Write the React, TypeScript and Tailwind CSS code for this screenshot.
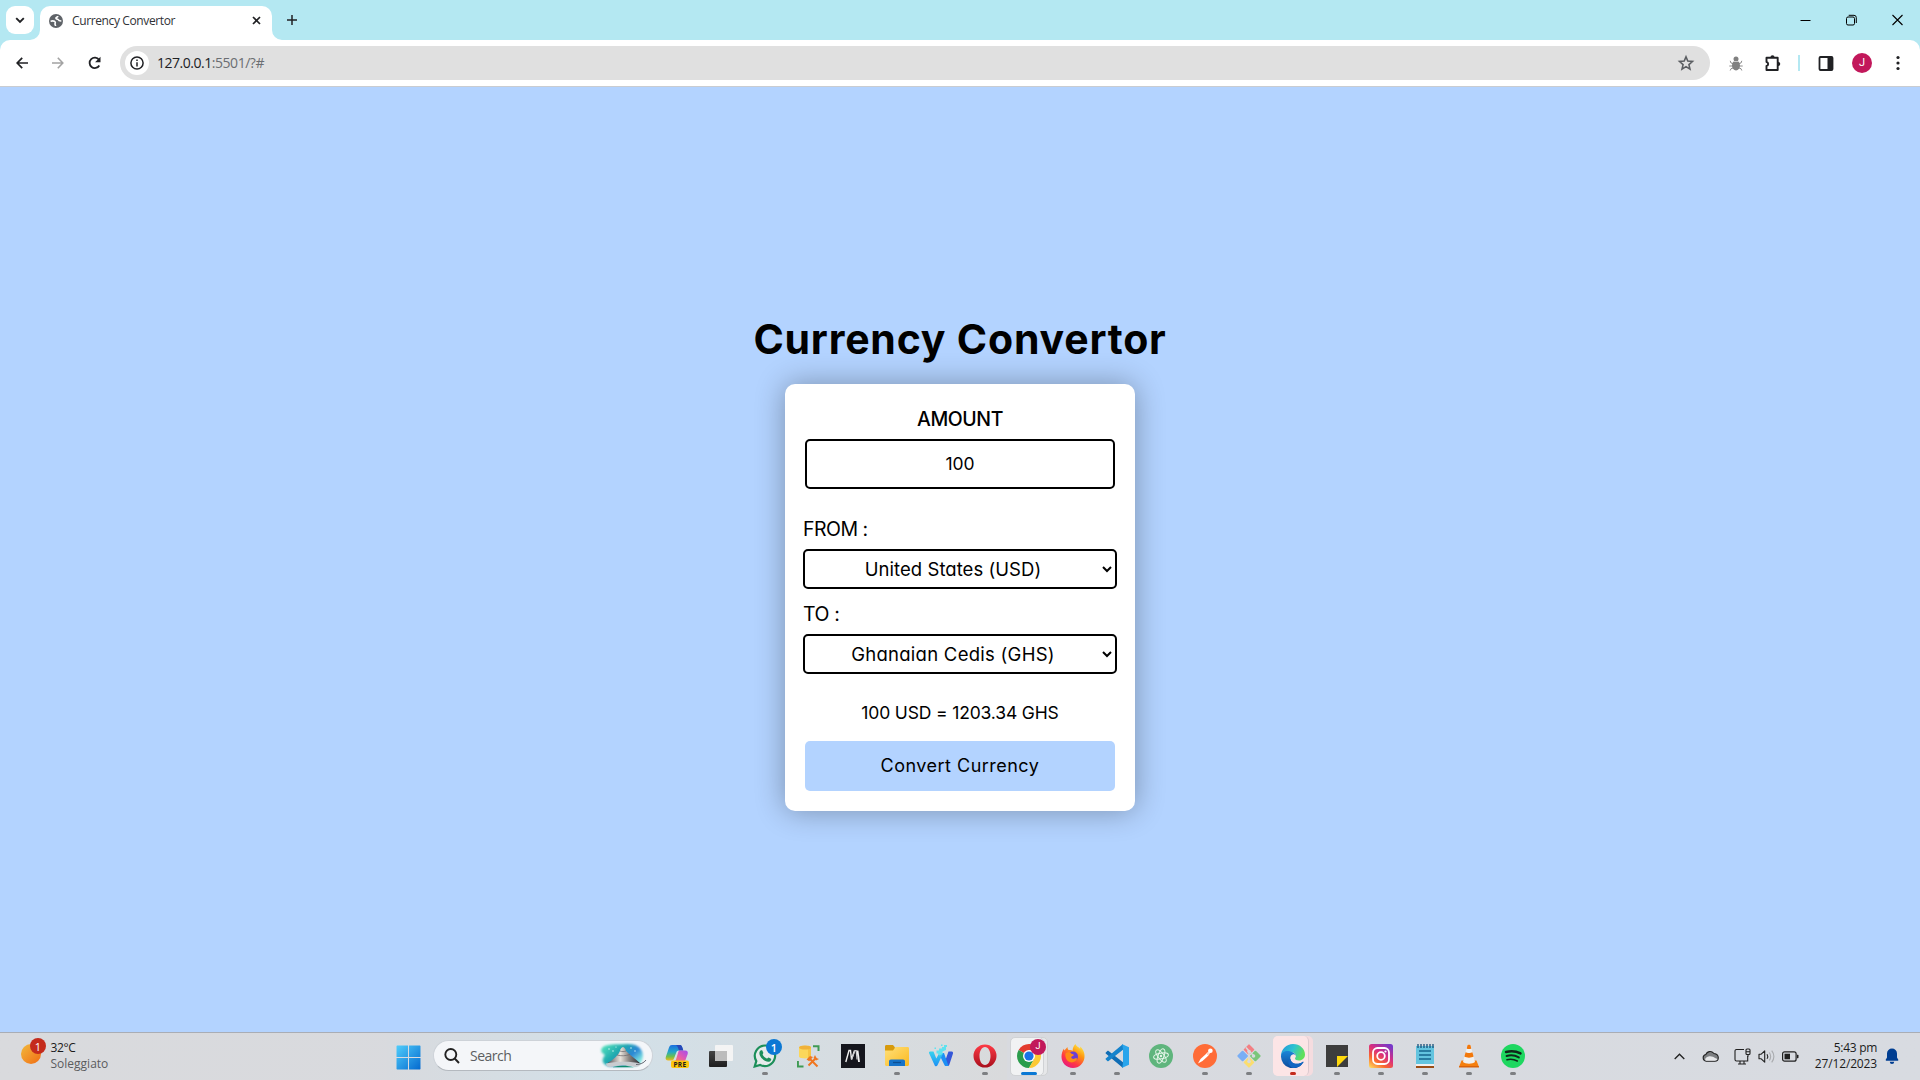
import type { ReactNode } from 'react';

/* ---------- Browser window ---------- */

function TabStrip() {
  return (
    <div className="flex h-10 items-start bg-[#b4e8f2]">
      <button className="mt-1.5 ml-1.5 flex size-7 items-center justify-center rounded-[9px] bg-white">
        <svg width="10" height="7" viewBox="0 0 10 7" fill="none" stroke="#202124" strokeWidth="1.9">
          <path d="M1.2 1.2 5 5l3.8-3.8" />
        </svg>
      </button>
      <svg className="mt-[30px] ml-[-4px] shrink-0" width="10" height="10" viewBox="0 0 10 10">
        <path d="M10 0v10H0A10 10 0 0 0 10 0Z" fill="#fff" />
      </svg>
      <div className="mt-1.5 flex h-[34px] w-[232px] items-center rounded-t-[10px] bg-white pr-[11.5px] pl-[9px]">
        <svg className="mb-[5px]" width="14" height="14" viewBox="0 0 14 14">
          <circle cx="7" cy="7" r="7" fill="#5f6368" />
          <path
            d="M1.600 7.200c1.600-.4 4-.4 4.600.8.500 1.100-.5 1.400-.2 2.300.2.700.6 1 .5 1.700M8.800 2c.1 1.500-2 1.100-1.900 2.300.1 1.200 2 .5 2.400 1.500.4 1 1.500 1.100 3 1.300"
            stroke="#fff"
            strokeWidth="1.600"
            fill="none"
          />
        </svg>
        <span className="mb-[5px] ml-[9px] flex-1 font-['Open_Sans',sans-serif] text-xs tracking-[-0.38px] whitespace-nowrap text-[#303236]">
          Currency Convertor
        </span>
        <svg className="mb-[6px]" width="9" height="9" viewBox="0 0 9 9" stroke="#202124" strokeWidth="1.7">
          <path d="M1 1l7 7M8 1 1 8" />
        </svg>
      </div>
      <svg className="mt-[30px] shrink-0" width="10" height="10" viewBox="0 0 10 10">
        <path d="M0 0v10h10A10 10 0 0 1 0 0Z" fill="#fff" />
      </svg>
      <svg className="mt-[15px] ml-[5px]" width="10" height="10" viewBox="0 0 10 10" stroke="#202124" strokeWidth="1.5">
        <path d="M5 0v10M0 5h10" />
      </svg>
      <div className="mt-[14px] mr-[17px] ml-auto flex items-center gap-[35px]">
        <svg width="11" height="12" viewBox="0 0 11 12" stroke="#000" strokeWidth="1">
          <path d="M.5 6.500h10" />
        </svg>
        <svg width="11" height="12" viewBox="0 0 11 12" fill="none" stroke="#000" strokeWidth="1">
          <rect x=".5" y="3" width="8" height="8" rx="1.500" />
          <path d="M2.700 1.300h5.300a2.300 2.300 0 0 1 2.300 2.300V9" />
        </svg>
        <svg width="11" height="12" viewBox="0 0 11 12" stroke="#000" strokeWidth="1.100">
          <path d="M.5 1l10 10M10.500 1l-10 10" />
        </svg>
      </div>
    </div>
  );
}

function Toolbar() {
  return (
    <div className="bg-[#b4e8f2]">
      <div className="flex h-[47px] items-center rounded-t-[10px] border-b border-[#c9ccd1] bg-white pl-4">
        <svg width="12" height="12" viewBox="0 0 12 12" fill="none" stroke="#202124" strokeWidth="1.7">
          <path d="M12 6H1.200M6.200.8 1.200 6l5 5.200" />
        </svg>
        <svg className="ml-6" width="12" height="12" viewBox="0 0 12 12" fill="none" stroke="#a3a3a3" strokeWidth="1.600">
          <path d="M0 6h10.800M5.800.8l5 5.200-5 5.200" />
        </svg>
        <svg className="ml-6" width="14" height="14" viewBox="0 0 14 14" fill="none" stroke="#202124" strokeWidth="1.800">
          <path d="M11.300 9.500A5.200 5.200 0 1 1 11 3.800" />
          <path d="M12.500.8v5.400H7.100Z" fill="#202124" stroke="none" />
        </svg>
        <div className="ml-[18px] flex h-[34px] w-[1590px] items-center rounded-full bg-[#e0e0e0] pr-[15px] pl-[5px]">
          <span className="flex size-6 items-center justify-center rounded-full bg-white">
            <svg width="14" height="14" viewBox="0 0 14 14" fill="none" stroke="#202124" strokeWidth="1.500">
              <circle cx="7" cy="7" r="6.100" />
              <path d="M7 6.200v4.300M7 3.400v1.500" />
            </svg>
          </span>
          <span className="ml-2 flex-1 font-['Open_Sans',sans-serif] text-sm tracking-[-0.47px] whitespace-nowrap text-[#202124]">
            127.0.0.1<span className="text-[#6b6e72]">:5501/?#</span>
          </span>
          <svg width="18" height="18" viewBox="0 0 24 24" fill="none" stroke="#5b5e62" strokeWidth="2.100">
            <path d="M12 3.800l2.400 5.700 6.200.5-4.700 4.100 1.400 6L12 16.900l-5.300 3.200 1.400-6L3.400 10l6.200-.5Z" />
          </svg>
        </div>
        <svg className="ml-[19px]" width="14" height="15" viewBox="0 0 14 15" fill="#808080" stroke="#808080">
          <circle cx="7" cy="3" r="2.500" stroke="none" />
          <ellipse cx="7" cy="9.500" rx="4" ry="5" stroke="none" />
          <path d="M4 7.500 2 7 1.200 4.800M10 7.500l2-.5.800-2.200M3.500 10H.3M10.500 10h3.200M4 12l-2 .7-.8 1.800M10 12l2 .7.800 1.800" fill="none" strokeWidth=".9" />
          <path d="M4.500 5.500h5" stroke="#ddd" strokeWidth=".8" />
        </svg>
        <svg className="ml-[21px]" width="18" height="17" viewBox="0 0 18 17" fill="none" stroke="#202124" strokeWidth="1.900">
          <path d="M2.500 2.800h11.200V15H2.500v-4c2.200-.5 2.200-3.500 0-4Z" strokeLinejoin="round" />
          <path d="M7.200 2.300a1.300 1.300 0 0 1 2.600 0ZM14.200 7.600a1.300 1.300 0 0 1 0 2.600Z" fill="#202124" strokeWidth="1.500" />
        </svg>
        <span className="ml-4 h-4 w-0.5 bg-[#b4e8f2]" />
        <svg className="ml-[18px]" width="16" height="15" viewBox="0 0 16 15">
          <rect x="1.500" y="1" width="13" height="13" rx="1" fill="none" stroke="#202124" strokeWidth="1.800" />
          <path d="M9.500 1H15v13H9.500Z" fill="#202124" />
        </svg>
        <span className="ml-[18px] flex size-5 items-center justify-center rounded-full bg-[#c2185b] font-['Roboto',sans-serif] text-[11px] text-white">
          J
        </span>
        <svg className="ml-6" width="4" height="16" viewBox="0 0 4 16" fill="#202124">
          <circle cx="2" cy="2.500" r="1.600" />
          <circle cx="2" cy="8" r="1.600" />
          <circle cx="2" cy="13.500" r="1.600" />
        </svg>
      </div>
    </div>
  );
}

/* ---------- Converter page ---------- */

const selectClass =
  'h-10 w-full rounded-[5px] border-2 border-black bg-white pr-0.5 text-center text-[18.5px] text-black';

function Converter() {
  return (
    <main className="flex h-[945px] flex-col items-center justify-center bg-[#b3d3ff] font-['Inter',sans-serif] text-black [font-feature-settings:'cv11']">
      <h1 className="h-[60px] text-[41px] leading-[60px] font-bold tracking-[0.8px] whitespace-nowrap">Currency Convertor</h1>
      <form className="mt-[15px] flex h-[427px] w-[350px] flex-col rounded-[10px] bg-white px-[18px] pt-5 shadow-[0_0_30px_rgba(0,0,0,0.32)]">
        <label className="text-center text-[19.5px] leading-[31px] font-medium tracking-[-0.4px]">AMOUNT</label>
        <input
          className="mx-0.5 mt-1 h-[50px] rounded-[5px] border-2 border-black text-center text-[17.5px]"
          defaultValue="100"
        />
        <label className="mt-[25px] text-[19.5px] leading-[31px] tracking-[-0.5px]">FROM :</label>
        <select className={`${selectClass} mt-1 tracking-[0.05px]`}>
          <option>United States (USD)</option>
        </select>
        <label className="mt-2.5 text-[19.5px] leading-[31px] tracking-[-0.4px]">TO :</label>
        <select className={`${selectClass} mt-1 tracking-[0.27px]`}>
          <option>Ghanaian Cedis (GHS)</option>
        </select>
        <p className="mt-[25px] text-center text-[17.5px] leading-[27px] tracking-[-0.15px]">100 USD = 1203.34 GHS</p>
        <button type="button" className="mx-0.5 mt-[15px] h-[50px] rounded-[5px] bg-[#b3d3ff] text-[18px] tracking-[0.48px]">
          Convert Currency
        </button>
      </form>
    </main>
  );
}

/* ---------- Taskbar icons ---------- */

function CopilotIcon() {
  return (
    <svg width="24" height="24" viewBox="0 0 24 24">
      <defs>
        <linearGradient id="cpA" x1="0" y1="0" x2="0" y2="1">
          <stop offset="0" stopColor="#1b6ee0" />
          <stop offset=".45" stopColor="#22a8c8" />
          <stop offset=".75" stopColor="#6fc04a" />
          <stop offset="1" stopColor="#f2b91c" />
        </linearGradient>
        <linearGradient id="cpB" x1="1" y1="0" x2="0" y2="1">
          <stop offset="0" stopColor="#a14df0" />
          <stop offset=".5" stopColor="#e359b0" />
          <stop offset="1" stopColor="#fb8b4b" />
        </linearGradient>
      </defs>
      <path d="M7 1h8c1.500 0 2 1.500 2.500 3l.8 2.500H14c-1.500 0-2.300.8-2.800 2.200L9 14.500C8.500 16 7.600 16.500 6.300 16.500H3.200C1 16.500.2 15 .8 13L4 3.500C4.600 1.800 5.500 1 7 1Z" fill="url(#cpA)" />
      <path d="M11 1h4c1.500 0 2 1.500 2.500 3l.8 2.500H14L12.500 2.500Z" fill="#2748b8" />
      <path d="M14.500 6.500h5.800c2 0 3 1.500 2.400 3.500L20.500 16c-.5 1.500-1.300 2-2.600 2H8.500c1.400 0 2-1 2.500-2.400l2-6.600c.4-1.500.7-2.500 1.500-2.500Z" fill="url(#cpB)" />
      <rect x="6" y="16.500" width="18" height="7.500" rx="2" fill="#fdc60b" />
      <text x="15" y="22.600" textAnchor="middle" fontFamily="Open Sans, sans-serif" fontWeight="700" fontSize="6.500" letterSpacing=".4" fill="#1b1b1b">PRE</text>
    </svg>
  );
}

function TaskViewIcon() {
  return (
    <svg width="24" height="24" viewBox="0 0 24 24">
      <defs>
        <linearGradient id="tvA" x1="0" y1="0" x2="0" y2="1">
          <stop offset="0" stopColor="#444" />
          <stop offset="1" stopColor="#1e1e1e" />
        </linearGradient>
      </defs>
      <rect x="0" y="7" width="18" height="16" rx="1" fill="url(#tvA)" />
      <rect x="6" y="1" width="18" height="16" rx="1" fill="#f4f4f4" />
      <path d="M6 7h12v10H7a1 1 0 0 1-1-1Z" fill="#bcbcbc" />
    </svg>
  );
}

function WhatsAppIcon() {
  return (
    <svg width="24" height="24" viewBox="0 0 24 24">
      <path d="M12.200 1.500a10.300 10.300 0 0 0-8.900 15.600L1.700 22.500l5.500-1.500A10.300 10.300 0 1 0 12.200 1.500Z" fill="#e6ebeb" stroke="#1c8f5a" strokeWidth="2.200" />
      <path d="M8 6.300c.5-.3 1-.2 1.300.3l1 2.200c.2.500-.9 1.400-.6 2 .9 1.700 2.300 2.900 4 3.700.6.300 1.500-1.200 2-1l2.300 1.200c.6.400-.3 2.500-1.200 2.800-1.300.6-3 .3-5-.8-2.300-1.300-4.200-3.300-5-5.400-.8-2-.5-4.100 1.200-5Z" fill="#1c8f5a" />
    </svg>
  );
}

function DatabaseToolsIcon() {
  return (
    <svg width="24" height="24" viewBox="0 0 24 24">
      <path d="M2 3.500C2 1 14 1 14 3.500v9c0 2.500-12 2.500-12 0Z" fill="#fbd75b" />
      <path d="M11 1.800c2 .3 3 .9 3 1.700v9c0 .9-1 1.500-3 1.800Z" fill="#f6c544" />
      <ellipse cx="8" cy="3.500" rx="6" ry="2" fill="#f0b23a" />
      <path d="M16 2.200h5.500V7M.9 17v5.500h5.600" fill="none" stroke="#3f9b54" strokeWidth="2" />
      <path d="M11.500 21.500l6.500-6.500M12.500 14.500l8 8" stroke="#f0761f" strokeWidth="2" fill="none" />
      <path d="M9.500 15.500l3.500-3.500 3 1-3.800 4.200ZM18 11l-1.500 3 2.500 2.500 3-1.500-2-.8-.9-1Z" fill="#f0761f" />
    </svg>
  );
}

function MIcon() {
  return (
    <svg width="24" height="24" viewBox="0 0 24 24">
      <path d="M0 0h24v24H0Z" fill="#15161d" />
      <path d="M4.800 18 8 6.500h1.500l1 9L13.500 6.500" fill="none" stroke="#f2f2f2" strokeWidth="1.400" />
      <path d="M10.500 15.500 14 6.500h1.200l.8 9" fill="none" stroke="#c9c9cc" strokeWidth="1.200" />
      <path d="M16.500 6.500 18 18" stroke="#f2f2f2" strokeWidth="1.900" />
    </svg>
  );
}

function FolderIcon() {
  return (
    <svg width="24" height="24" viewBox="0 0 24 24">
      <defs>
        <linearGradient id="foA" x1="0" y1="0" x2="1" y2="1">
          <stop offset="0" stopColor="#ffe07a" />
          <stop offset="1" stopColor="#fbb91f" />
        </linearGradient>
      </defs>
      <path d="M0 2.500C0 1.500.6 1 1.500 1H8l2 2.500V9H0Z" fill="#d79a0c" />
      <path d="M0 6.500h8L10.500 3H22.500c1 0 1.500.5 1.500 1.500v16c0 .9-.6 1.500-1.500 1.500h-21C.6 22 0 21.400 0 20.500Z" fill="url(#foA)" />
      <path d="M4 22v-4.500c0-1.300.7-2 2-2h12c1.300 0 2 .7 2 2V22Z" fill="#1673c9" />
      <path d="M8 18.500h8" stroke="#0d4f92" strokeWidth="1.300" />
    </svg>
  );
}

function WIcon() {
  return (
    <svg width="24" height="24" viewBox="0 0 24 24">
      <defs>
        <linearGradient id="wA" x1="0" y1="0" x2="0" y2="1">
          <stop offset="0" stopColor="#36d3ee" />
          <stop offset="1" stopColor="#1d90f5" />
        </linearGradient>
      </defs>
      <path d="M14 14l2.500 8h2.200c.8 0 1.300-.4 1.600-1.200L24 9.500c.3-1.200-.3-2-1.300-2h-3.200L17 14.500Z" fill="#3557d8" />
      <path d="M11.500 9h3.500L19.500 22H17c-.8 0-1.400-.5-1.700-1.300L12 14Z" fill="#1d90f5" />
      <path d="M0 9c-.2-.9.300-1.500 1.200-1.500h3.300l2.800 7 3-5.500h4L8.500 21.300c-.4.700-.8 1-1.500 1s-1.200-.4-1.500-1.300Z" fill="url(#wA)" />
      <path d="M7.500 6.500h2.500v-2h3V3h4v3l-3.500 1.500V10l-3 1.500-1.500-2H7.500ZM12 .5h1.500V2H12ZM15 1h3v2h-3ZM5.500 3.500H7V5H5.500Z" fill="#5fe2ef" />
    </svg>
  );
}

function OperaIcon() {
  return (
    <svg width="24" height="24" viewBox="0 0 24 24">
      <defs>
        <linearGradient id="opA" x1="0" y1="0" x2="0" y2="1">
          <stop offset="0" stopColor="#ff3a45" />
          <stop offset="1" stopColor="#a80e1c" />
        </linearGradient>
      </defs>
      <path fillRule="evenodd" d="M12 .5a11.500 11.500 0 1 0 0 23 11.500 11.500 0 0 0 0-23ZM12 3c3.300 0 5.500 4 5.500 9s-2.200 9-5.500 9-5.500-4-5.500-9S8.700 3 12 3Z" fill="url(#opA)" />
    </svg>
  );
}

function ChromeIcon() {
  return (
    <svg width="24" height="24" viewBox="0 0 24 24">
      <path d="M12 12 1.610 6A12 12 0 0 1 22.390 6Z" fill="#e33b2e" />
      <path d="M12 12 1.610 6A12 12 0 0 0 12 24l5.200-9Z" fill="#2a9d4c" />
      <path d="M12 12l5.200 3L12 24A12 12 0 0 0 22.390 6H12Z" fill="#fcc934" />
      <path d="M12 6h10.390L12 0Z" fill="#e33b2e" />
      <circle cx="12" cy="12" r="6" fill="#fff" />
      <circle cx="12" cy="12" r="4.600" fill="#1a73e8" />
    </svg>
  );
}

function FirefoxIcon() {
  return (
    <svg width="24" height="24" viewBox="0 0 24 24">
      <defs>
        <linearGradient id="ffA" x1=".85" y1="0" x2=".2" y2="1">
          <stop offset="0" stopColor="#fff44f" />
          <stop offset=".35" stopColor="#ff980e" />
          <stop offset=".7" stopColor="#ff3647" />
          <stop offset="1" stopColor="#e31587" />
        </linearGradient>
      </defs>
      <path d="M14.500 0c.2 2 3 3 4.700 4.800.2-.8 0-1.500-.2-2.200C21.500 4.500 24 8.500 23.500 13A11.600 11.600 0 0 1 12 24C5.500 24 .5 19 .5 12.800.5 9.500 1.500 6.500 3 4.500c0 1 .2 1.500.5 2C5 4.500 5.500 4 6.500 3c0 1.200.3 2.500 1.200 3 1.700-.3 3 0 4 .7C11.500 4.500 12.500 1.800 14.500 0Z" fill="url(#ffA)" />
      <circle cx="12" cy="12.500" r="5" fill="#6b3fd4" />
      <path d="M4.500 9.500c2-1.800 4.500-1.500 6 .2 1.200.2 2.300.5 2.300 1.300 0 1.200-2.300 1-2.600 2.300-.2 1 1.500 2 3 1.500 1.300-.5 2.300-.6 3-.2-1 3.500-5 4.700-8 3.200-2.700-1.300-4.400-4.700-3.700-8.300Z" fill="#ff8a16" />
    </svg>
  );
}

function VSCodeIcon() {
  return (
    <svg width="24" height="24" viewBox="0 0 24 24">
      <path d="M.6 8.700 2.300 7c.4-.3.900-.3 1.300 0L18 18.200V24L1 9.700C.5 9.400.5 9 .6 8.700Z" fill="#0f6db5" />
      <path d="M.6 15.300 2.300 17c.4.300.9.300 1.300 0L18 5.800V0L1 14.300c-.5.300-.5.700-.4 1Z" fill="#1583cc" />
      <path d="M17.300 23.800 24 20.800V3.200L17.300.2 18 5.600v12.800Z" fill="#29a5ec" />
    </svg>
  );
}

function AtomIcon() {
  return (
    <svg width="24" height="24" viewBox="0 0 24 24">
      <circle cx="12" cy="12" r="12" fill="#5fb57d" />
      <g fill="none" stroke="#e4f5e8" strokeWidth="1">
        <ellipse cx="12" cy="12" rx="2.900" ry="7.500" transform="rotate(20 12 12)" />
        <ellipse cx="12" cy="12" rx="2.900" ry="7.500" transform="rotate(-38 12 12)" />
        <ellipse cx="12" cy="12" rx="2.900" ry="7.500" transform="rotate(80 12 12)" />
      </g>
      <circle cx="12" cy="12" r="1.200" fill="#e4f5e8" />
    </svg>
  );
}

function PostmanIcon() {
  return (
    <svg width="24" height="24" viewBox="0 0 24 24">
      <circle cx="12" cy="12" r="12" fill="#ff6c37" />
      <path d="M5 19.500 7.500 15l6-5.500 2 2-6 5.500Z" fill="#fff" />
      <path d="M13 9.500l3-2.500 1.500 1.600-2 3Z" fill="#ffd9cb" />
      <circle cx="17.400" cy="6.700" r="2.300" fill="#fff" />
    </svg>
  );
}

function GitIcon() {
  return (
    <svg width="24" height="24" viewBox="0 0 24 24">
      <g transform="rotate(45 12 12)">
        <rect x="3.500" y="3.500" width="8" height="8" rx="1" fill="#f37f83" />
        <rect x="12.500" y="3.500" width="8" height="8" rx="1" fill="#7bc67a" />
        <rect x="3.500" y="12.500" width="8" height="8" rx="1" fill="#79aef5" />
        <rect x="12.500" y="12.500" width="8" height="8" rx="1" fill="#fbdd6f" />
      </g>
      <path d="M9 3.500l3 3.500v11M12 7l4.500 4.500" stroke="#d7dade" strokeWidth="1.600" fill="none" />
      <circle cx="12" cy="7.500" r="1.800" fill="#d7dade" />
      <circle cx="16.500" cy="12" r="1.800" fill="#d7dade" />
      <circle cx="12" cy="17.500" r="1.800" fill="#d7dade" />
    </svg>
  );
}

function EdgeIcon() {
  return (
    <svg width="24" height="24" viewBox="0 0 24 24">
      <defs>
        <linearGradient id="edA" x1="0" y1="0" x2="1" y2=".35">
          <stop offset="0" stopColor="#2494dc" />
          <stop offset=".55" stopColor="#2fc3d0" />
          <stop offset="1" stopColor="#5fe05b" />
        </linearGradient>
        <linearGradient id="edB" x1="0" y1="0" x2="0" y2="1">
          <stop offset="0" stopColor="#1c86d8" />
          <stop offset="1" stopColor="#0c4a9c" />
        </linearGradient>
      </defs>
      <path d="M0 12C0 5 5.500 0 12 0c7 0 12 5 12 10.500 0 3.600-2.700 6-6 6-2.500 0-4-1-4-2 0-.6.900-1 .9-2.500 0-2-1.900-3.700-4.400-3.700C6 8.300 2 9.300 0 12Z" fill="url(#edA)" />
      <path d="M0 12c.5-4 5-6 9.500-4.500C12.500 8.300 14.900 10 14.900 12c-.6-1.300-2-2-3.200-1.600-1.700.5-2.700 2.300-2.400 4.300.4 3 3 5 6.300 5 2.500 0 4.500-.8 6-1.800.6-.4 1 .1.700.6A12 12 0 0 1 0 12Z" fill="url(#edB)" />
      <path d="M9.300 14.700c.4 3 3 5 6.300 5 2.500 0 4.500-.8 6-1.800.6-.4 1 .1.700.6A12 12 0 0 1 12 24c-4.500-1.500-6.500-6.500-2.700-9.300Z" fill="#1266c2" />
    </svg>
  );
}

function StickyNotesIcon() {
  return (
    <svg width="24" height="24" viewBox="0 0 24 24">
      <path d="M1 1h22v22H1Z" fill="#3d3d3d" />
      <path d="M12 12h11L12 23Z" fill="#ffd80b" />
    </svg>
  );
}

function InstagramIcon() {
  return (
    <svg width="24" height="24" viewBox="0 0 24 24">
      <defs>
        <linearGradient id="igA" x1=".1" y1="1" x2=".8" y2="0">
          <stop offset="0" stopColor="#fed35a" />
          <stop offset=".3" stopColor="#f9662f" />
          <stop offset=".6" stopColor="#d92e7f" />
          <stop offset="1" stopColor="#7638c9" />
        </linearGradient>
      </defs>
      <rect width="24" height="24" rx="2.500" fill="url(#igA)" />
      <rect x="4" y="4" width="16" height="16" rx="4.500" fill="none" stroke="#fff" strokeWidth="1.800" />
      <circle cx="12" cy="12" r="3.800" fill="none" stroke="#fff" strokeWidth="1.800" />
      <circle cx="16.500" cy="7.500" r="1.100" fill="#fff" />
    </svg>
  );
}

function NotepadIcon() {
  return (
    <svg width="24" height="24" viewBox="0 0 24 24">
      <path d="M3 2h18v19H3Z" fill="#63c4df" />
      <path d="M5 0v4M8 0v4M11 0v4M14 0v4M17 0v4M20 0v4" stroke="#174f78" strokeWidth="1.300" />
      <path d="M6 7h12M6 11h12M6 15h12" stroke="#17658f" strokeWidth="1.300" />
      <path d="M3 20h18v2H3Z" fill="#f0f0f0" />
      <path d="M3 22h18v2H3Z" fill="#9b4d16" />
    </svg>
  );
}

function VlcIcon() {
  return (
    <svg width="24" height="24" viewBox="0 0 24 24">
      <path d="M4.500 16.500h15L22 23H2Z" fill="#f57f0f" />
      <path d="M10.500 1.200c.8-.6 2.200-.6 3 0L18 18c-2.500 2.300-9.500 2.300-12 0Z" fill="#f1f1f1" />
      <path d="M10.500 1.200c.8-.6 2.200-.6 3 0l.8 3.200c-1 .7-3.600.7-4.600 0ZM8.600 8.300c1.500 1 5.300 1 6.800 0l1.200 4.300c-2 1.400-7.200 1.400-9.200 0Z" fill="#f2780c" />
      <path d="M2.300 22h19.400l.3 1.500H2Z" fill="#d9620a" />
    </svg>
  );
}

function SpotifyIcon() {
  return (
    <svg width="24" height="24" viewBox="0 0 24 24">
      <circle cx="12" cy="12" r="12" fill="#1ed760" />
      <g fill="none" stroke="#10261a" strokeLinecap="round">
        <path d="M5 8c5-1.400 10-1 14.500 1.400" strokeWidth="2.400" />
        <path d="M5.600 12c4.300-1.200 8.500-.7 12.200 1.400" strokeWidth="2" />
        <path d="M6 15.700c3.700-.9 7-.5 10.300 1.300" strokeWidth="1.600" />
      </g>
    </svg>
  );
}

type TaskbarApp = { name: string; icon: ReactNode; running?: boolean; badge?: string };

const leftApps: TaskbarApp[] = [
  { name: 'Copilot', icon: <CopilotIcon /> },
  { name: 'Task view', icon: <TaskViewIcon /> },
  { name: 'WhatsApp', icon: <WhatsAppIcon />, running: true, badge: '1' },
  { name: 'Database tools', icon: <DatabaseToolsIcon /> },
  { name: 'M', icon: <MIcon /> },
  { name: 'File Explorer', icon: <FolderIcon />, running: true },
  { name: 'W', icon: <WIcon /> },
  { name: 'Opera', icon: <OperaIcon />, running: true },
];
const middleApps: TaskbarApp[] = [
  { name: 'Firefox', icon: <FirefoxIcon />, running: true },
  { name: 'VS Code', icon: <VSCodeIcon />, running: true },
  { name: 'Atom', icon: <AtomIcon /> },
  { name: 'Postman', icon: <PostmanIcon />, running: true },
  { name: 'Git', icon: <GitIcon />, running: true },
];
const rightApps: TaskbarApp[] = [
  { name: 'Sticky Notes', icon: <StickyNotesIcon />, running: true },
  { name: 'Instagram', icon: <InstagramIcon />, running: true },
  { name: 'Notepad', icon: <NotepadIcon />, running: true },
  { name: 'VLC', icon: <VlcIcon />, running: true },
  { name: 'Spotify', icon: <SpotifyIcon />, running: true },
];

function TaskApp({ app }: { app: TaskbarApp }) {
  return (
    <div className="relative flex h-[47px] w-11 flex-col items-center pt-[11px]" aria-label={app.name}>
      {app.icon}
      {app.running && <span className="mt-1 h-[3px] w-1.5 rounded-full bg-[#7d7f82]" />}
      {app.badge && (
        <span className="absolute top-1.5 right-[5px] flex size-4 items-center justify-center rounded-full bg-[#0b78d4] font-['Open_Sans',sans-serif] text-[11px] leading-none font-semibold text-white">
          {app.badge}
        </span>
      )}
    </div>
  );
}

function SearchBox() {
  return (
    <div className="flex h-[31px] w-[220px] items-center overflow-hidden rounded-full border border-b-[#b4b9bf] border-[#cdd2d8] bg-[#f4f6f9] pr-1 pl-2.5">
      <svg width="16" height="16" viewBox="0 0 16 16" fill="none" stroke="#222" strokeWidth="1.900">
        <circle cx="6.800" cy="6.500" r="5.500" />
        <path d="M10.700 10.500 15 15" />
      </svg>
      <span className="ml-[10px] flex-1 font-['Open_Sans',sans-serif] text-sm tracking-[-0.5px] text-[#5c5e61]">Search</span>
      <svg width="49" height="27" viewBox="0 0 49 27">
        <defs>
          <linearGradient id="seA" x1="0" y1="0" x2="1" y2=".6">
            <stop offset="0" stopColor="#5ceabf" />
            <stop offset=".45" stopColor="#1fa9ae" />
            <stop offset=".75" stopColor="#2c86d6" />
            <stop offset="1" stopColor="#7be3e0" />
          </linearGradient>
          <linearGradient id="seB" x1="0" y1="0" x2="1" y2="0">
            <stop offset="0" stopColor="#4c4a4e" />
            <stop offset=".4" stopColor="#e9e3dc" />
            <stop offset=".65" stopColor="#8b8683" />
            <stop offset="1" stopColor="#25282f" />
          </linearGradient>
          <filter id="seF" x="-10%" y="-10%" width="120%" height="120%">
            <feGaussianBlur stdDeviation="1.200" />
          </filter>
        </defs>
        <path d="M3 6C6 1.500 18 2.500 27 2c9-.5 15 3 16.500 8.500C45 18 41 23 36 24.500H10C3 22 2 18 6 13 3 11 1 9 3 6Z" fill="url(#seA)" filter="url(#seF)" />
        <g fill="#dffcf8">
          <circle cx="10" cy="7" r=".7" />
          <circle cx="14" cy="9" r=".7" />
          <circle cx="17" cy="5" r=".6" />
          <circle cx="32" cy="6" r=".7" />
          <circle cx="36" cy="9" r=".7" />
        </g>
        <path d="M24 5c1.500.4 2.700 2 3 4 4.500 4.500 9.500 8 14.500 12.500H8c6-3.500 11.500-8.500 13-12.500.3-2 1.500-3.500 3-4Z" fill="url(#seB)" />
        <path d="M21 9c2 .8 4 .8 6 0M18 13c4 1.200 8.500 1 13-.5" stroke="#6a6668" strokeWidth=".7" fill="none" />
        <path d="M7 21.500c10-2.500 25-2.500 35 0-1 2.500-3.500 3.500-6 3.500-9-2-17-2-25 0-2 0-4-1-4-3.500Z" fill="#c9ccd0" />
        <path d="M14 25c7-1.800 14-1.800 21 .3H14Z" fill="#118a6d" />
        <path d="M37 22.500c4 0 8-1.500 10-4.500" stroke="#555b66" strokeWidth=".9" fill="none" />
      </svg>
    </div>
  );
}

function Taskbar() {
  return (
    <footer className="flex h-12 items-start border-t border-[#a9adb5] bg-linear-to-r from-[#d9dadd] via-[#d8dadf] to-[#d8dbe1]">
      <div className="flex w-[387px] items-start pl-[21px]">
        <div className="relative mt-[11px] size-[22px]">
          <span className="block size-5 rounded-full bg-linear-to-br from-[#f0b93c] to-[#ef6a10]" />
          <span className="absolute -top-[6px] left-[9px] flex size-4 items-center justify-center rounded-full bg-[#c42b1c] font-['Open_Sans',sans-serif] text-[11px] leading-none text-white">
            1
          </span>
        </div>
        <div className="mt-[7px] ml-[7.500px] font-['Open_Sans',sans-serif] text-xs leading-4 text-[#1b1b1b]">
          <div className="tracking-[-0.35px]">32°C</div>
          <div className="text-[#5b5c5e]">Soleggiato</div>
        </div>
      </div>
      <div className="flex h-[47px] items-start bg-linear-to-r from-[#d8dade] via-[#d2e0e8] via-35% to-[#d9dadc]">
        <svg className="mt-3 ml-[9px]" width="25" height="25" viewBox="0 0 24 24">
          <defs>
            <linearGradient id="winA" x1="0" y1="0" x2="1" y2="1">
              <stop offset="0" stopColor="#4fcdfb" />
              <stop offset="1" stopColor="#0469cf" />
            </linearGradient>
          </defs>
          <path d="M1 .5h10.500v11H.5V1ZM12.500.5H23l.5.5v10.500h-11ZM.5 12.500h11v11H1l-.5-.5ZM12.500 12.500h11V23l-.5.500H12.500Z" fill="url(#winA)" />
        </svg>
        <div className="mt-[7px] ml-3">
          <SearchBox />
        </div>
        <div className="ml-0.5 flex">
          {leftApps.map((app) => (
            <TaskApp key={app.name} app={app} />
          ))}
        </div>
      </div>
      <div className="relative flex h-[47px] w-11 flex-col items-center pt-[11px]">
        <span className="absolute top-1 left-[3px] h-[39px] w-[38px] rounded-[5px] border border-[#cfd1d3] bg-[#e6e7e9]" />
        <span className="absolute top-1 left-[3px] h-[39px] w-[34px] rounded-[5px] border border-[#d0d2d5] bg-[#f1f2f3]" />
        <span className="relative">
          <ChromeIcon />
        </span>
        <span className="relative mt-1 h-[3px] w-4 rounded-full bg-[#0b78d4]" />
        <span className="absolute top-1.5 left-[23px] flex size-4 items-center justify-center rounded-full bg-[#c2185b] font-['Roboto',sans-serif] text-[9px] text-white">
          J
        </span>
      </div>
      <div className="flex">
        {middleApps.map((app) => (
          <TaskApp key={app.name} app={app} />
        ))}
      </div>
      <div className="relative flex h-[47px] w-11 flex-col items-center pt-[11px]">
        <span className="absolute top-[3px] left-[2px] h-10 w-10 rounded-[5px] bg-[#f5dcdf]" />
        <span className="absolute top-[3px] left-[2px] h-10 w-[36px] rounded-[5px] border-r border-[#dccacf] bg-[#fce5e6]" />
        <span className="relative">
          <EdgeIcon />
        </span>
        <span className="relative mt-1 h-[3px] w-1.5 rounded-full bg-[#c42b1c]" />
      </div>
      <div className="flex">
        {rightApps.map((app) => (
          <TaskApp key={app.name} app={app} />
        ))}
      </div>
      <div className="mr-[21px] ml-auto flex h-[46px] items-center">
        <svg width="11" height="7" viewBox="0 0 11 7" fill="none" stroke="#202020" strokeWidth="1.300">
          <path d="M.7 6 5.500 1.200 10.300 6" />
        </svg>
        <svg className="ml-[17px]" width="17" height="12" viewBox="0 0 17 12">
          <path d="M4.200 11.200A3.400 3.400 0 0 1 3.800 4.500C5 1.800 8.800-.2 12 3.500c2.800.4 4.300 2.300 4.300 4.200 0 2-1.600 3.500-3.500 3.500Z" fill="#7d7f82" stroke="#222" strokeWidth="1.100" />
          <path d="M3.500 10.500C2.500 8.500 4.500 7 6.500 6.500c3-.5 5 .5 6.500 1.500l2.500 1c-.5 1.300-1.500 1.700-2.700 1.700H4.200Z" fill="#e7e8ea" />
        </svg>
        <svg className="ml-[15px]" width="17" height="17" viewBox="0 0 17 17" fill="none" stroke="#202020" strokeWidth="1.100">
          <path d="M10 1.500H2.500a1.500 1.500 0 0 0-1.500 1.500v8.500A1.500 1.500 0 0 0 2.500 13h11.200V8M4 16h8M6 13v3M10 13v3" />
          <rect x="12" y="1" width="4" height="5.500" rx="1" />
          <path d="M12 3.700h4M14 6.500v2" />
        </svg>
        <svg className="ml-[7px]" width="18" height="15" viewBox="0 0 18 15" fill="none" stroke="#202020" strokeWidth="1.100">
          <path d="M1 5.200h2.200L6.700 1.800v11.400L3.200 9.800H1Z" strokeLinejoin="round" />
          <path d="M9 5.200c.9 1.400.9 3.200 0 4.600" />
          <path d="M11.300 3.500c1.700 2.500 1.700 5.500 0 8M13.700 1.700c2.700 3.500 2.700 8 0 11.600" stroke="#a9abae" />
        </svg>
        <svg className="ml-1.5" width="17" height="11" viewBox="0 0 17 11">
          <rect x=".6" y=".8" width="13.500" height="9.400" rx="2" fill="none" stroke="#202020" strokeWidth="1.200" />
          <rect x="2.500" y="2.700" width="5.500" height="5.600" fill="#202020" />
          <path d="M15 3.700h.8c.4 0 .7.300.7.700v2.200c0 .4-.3.700-.7.700H15Z" fill="#202020" />
        </svg>
        <div className="ml-[14px] w-[64px] text-right font-['Open_Sans',sans-serif] text-xs leading-4 whitespace-nowrap text-[#1b1b1b]">
          <div className="tracking-[-0.3px]">5:43 pm</div>
          <div className="tracking-[-0.15px]">27/12/2023</div>
        </div>
        <svg className="ml-2" width="14" height="16" viewBox="0 0 14 16" fill="#003e92">
          <path d="M7 .5a5 5 0 0 1 5 5v4l1.300 2.300c.2.500 0 .9-.5.900H1.200c-.5 0-.7-.4-.5-.9L2 9.500v-4a5 5 0 0 1 5-5ZM4.800 13.700h4.400a2.200 2.200 0 0 1-4.400 0Z" />
        </svg>
      </div>
    </footer>
  );
}

export default function App() {
  return (
    <div className="h-[1080px] w-[1920px] overflow-hidden">
      <TabStrip />
      <Toolbar />
      <Converter />
      <Taskbar />
    </div>
  );
}
